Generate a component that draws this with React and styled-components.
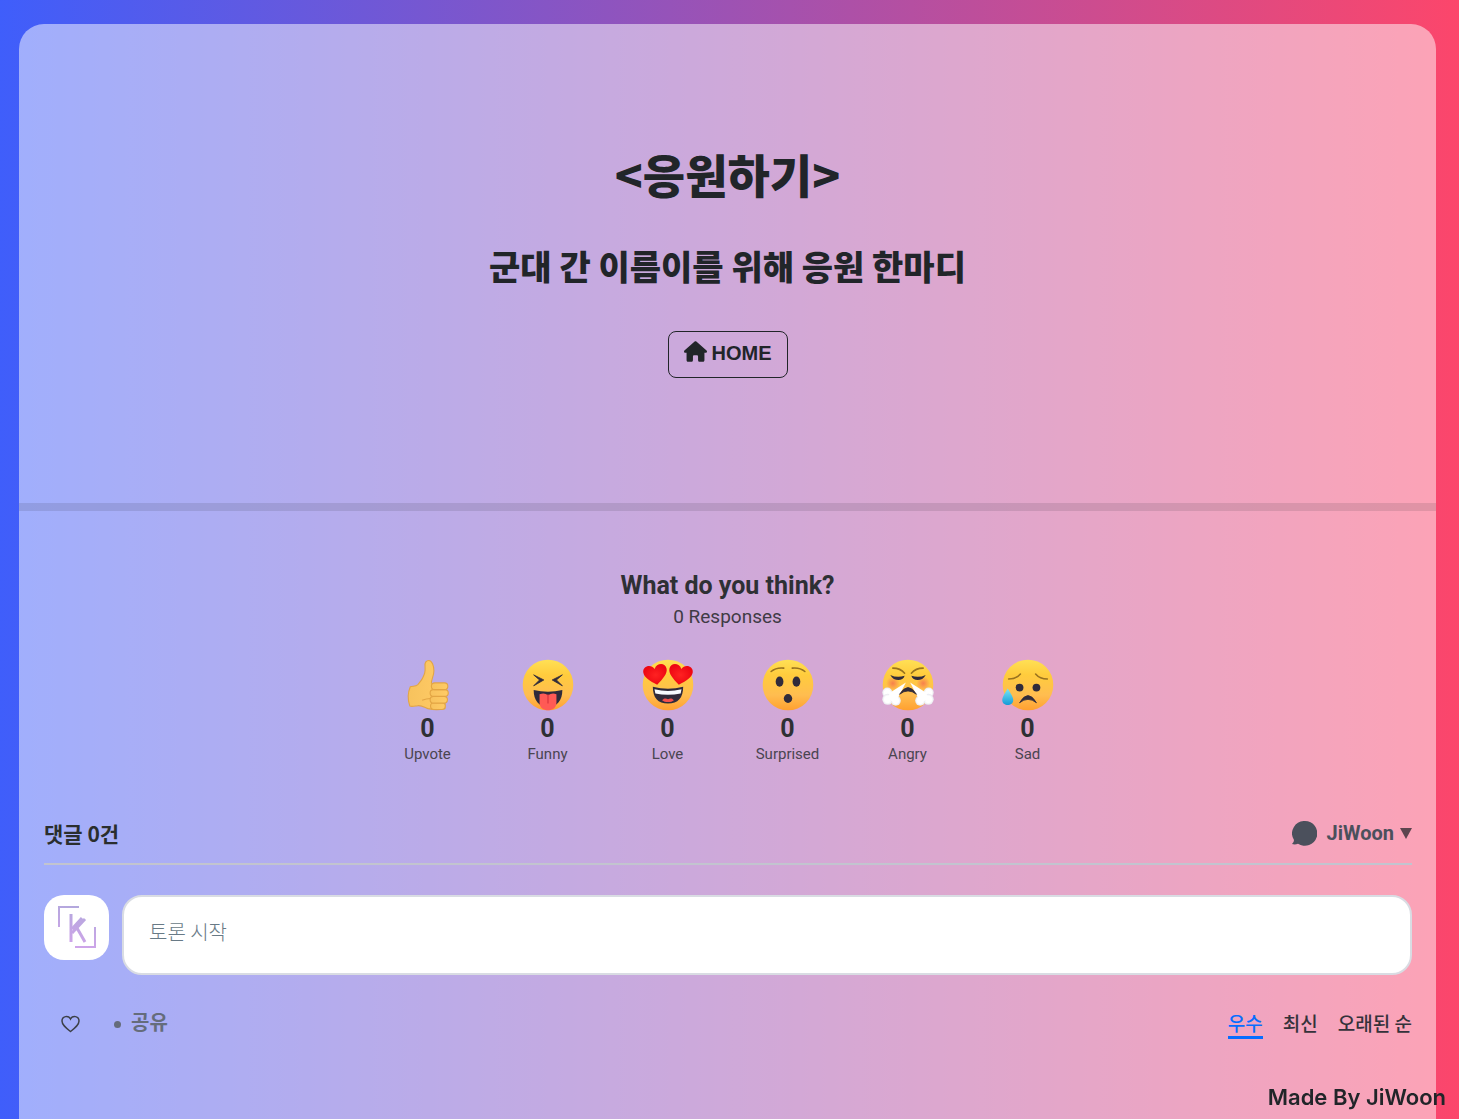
import React from "react";
import styled, { createGlobalStyle } from "styled-components";
import { FaHouse } from "react-icons/fa6";

const KOREAN = '"Noto Sans CJK KR", sans-serif';

const GlobalStyle = createGlobalStyle`
  * { box-sizing: border-box; }
  body {
    margin: 0;
    background: linear-gradient(to right, #3f5efb, #fc466b);
    color: #212529;
    font-family: Roboto, ${KOREAN};
  }
  h1, h2, h3, p { margin: 0; }
  button { padding: 0; border: 0; background: none; color: inherit; font: inherit; cursor: pointer; }
  a { color: inherit; text-decoration: none; }
  svg { display: block; flex: none; }
`;

const Page = styled.div`
  display: flex;
  min-height: 100vh;
  padding: 24px 23px 0 19px;
`;

const Panel = styled.main`
  flex: 1;
  min-width: 0;
  border-radius: 25px 25px 0 0;
  background: rgba(255, 255, 255, 0.5);
`;

const Hero = styled.header`
  display: flex;
  flex-direction: column;
  align-items: center;
  padding: 119px 24px 125px;
  border-bottom: 8px solid rgba(33, 37, 41, 0.12);
  font-family: ${KOREAN};
  text-align: center;
`;

const Title = styled.h1`
  font-size: 46px;
  font-weight: 900;
  line-height: 60px;
`;

const Subtitle = styled.h2`
  margin-top: 43px;
  font-size: 34px;
  font-weight: 900;
  line-height: 40px;
`;

const HomeLink = styled.a`
  display: flex;
  gap: 5px;
  margin-top: 45px;
  padding: 8px 15px;
  height: 47px;
  border: 1px solid #212529;
  border-radius: 8px;
  font-family: "Liberation Sans", sans-serif;
  font-size: 20px;
  font-weight: 700;
  line-height: 26px;
`;

const Reactions = styled.section`
  display: flex;
  flex-direction: column;
  align-items: center;
  padding-top: 60px;
  color: #2e3034;
`;

const Question = styled.h3`
  font-size: 25px;
  font-weight: 700;
  line-height: 30px;
`;

const Responses = styled.p`
  margin-top: 4px;
  font-size: 19px;
  line-height: 24px;
  color: #3f3b45;
`;

const ReactionList = styled.div`
  display: flex;
  flex-wrap: wrap;
  justify-content: center;
  margin-top: 29px;
`;

const Reaction = styled.button`
  display: flex;
  flex-direction: column;
  align-items: center;
  width: 120px;
`;

const Count = styled.span`
  margin-top: 2px;
  font-size: 25px;
  font-weight: 700;
  line-height: 30px;
`;

const ReactionName = styled.span`
  font-size: 15px;
  line-height: 20px;
  color: #4a4550;
`;

const Thread = styled.section`
  padding: 56px 24px 80px 25px;
`;

const ThreadBar = styled.div`
  display: flex;
  align-items: center;
  justify-content: space-between;
  height: 45px;
  padding-bottom: 17px;
  border-bottom: 2px solid #c2c4cf;
`;

const CommentCount = styled.h3`
  font-family: ${KOREAN};
  font-size: 21px;
  font-weight: 700;
  line-height: 24px;
  color: #2a2e2e;
`;

const UserMenu = styled.button`
  display: flex;
  align-items: center;
  gap: 6px;
  color: #4b505c;
  font-size: 20px;
  font-weight: 700;
  line-height: 24px;
`;

const UserName = styled.span`
  margin-left: 4px;
`;

const Composer = styled.form`
  display: flex;
  gap: 13px;
  margin-top: 30px;
`;

const Avatar = styled.span`
  display: block;
  flex: none;
  width: 65px;
  height: 65px;
  border-radius: 20px;
  background: #fff;
`;

const CommentBox = styled.textarea`
  flex: 1;
  min-width: 0;
  height: 80px;
  padding: 20px 25px;
  border: 2px solid #d9dce3;
  border-radius: 20px;
  background: #fff;
  resize: none;
  outline: none;
  font-family: ${KOREAN};
  font-size: 20px;
  font-weight: 300;
  line-height: 30px;
  &::placeholder { color: #687a86; opacity: 1; }
`;

const ThreadActions = styled.div`
  display: flex;
  align-items: flex-start;
  justify-content: space-between;
  margin-top: 35px;
  font-family: ${KOREAN};
`;

const ActionGroup = styled.div`
  display: flex;
  align-items: center;
  gap: 34px;
  padding-left: 17px;
`;

const LikeButton = styled.button`
  padding-top: 3px;
`;

const ShareButton = styled.button`
  display: flex;
  align-items: center;
  gap: 10px;
  color: #656c7b;
  font-size: 20px;
  font-weight: 700;
  line-height: 24px;
`;

const Dot = styled.span`
  width: 7px;
  height: 7px;
  margin-top: 4px;
  border-radius: 50%;
  background: currentColor;
`;

const SortGroup = styled.div`
  display: flex;
  gap: 20px;
`;

const SortButton = styled.button`
  height: 29px;
  border-bottom: 3px solid ${(p) => (p.$active ? "#076dff" : "transparent")};
  color: ${(p) => (p.$active ? "#076dff" : "#34323a")};
  font-size: 19px;
  font-weight: 500;
  line-height: 26px;
`;

const Credit = styled.footer`
  position: fixed;
  right: 13px;
  bottom: 8px;
  font-family: Inter, sans-serif;
  font-size: 22px;
  font-weight: 600;
  line-height: 28px;
`;

const INK = "#302b3b";

function Face({ children }) {
  return (
    <>
      <circle cx="32" cy="32" r="30" fill="url(#skin)" />
      {children}
    </>
  );
}

const Thumb = () => (
  <g fill="url(#hand)" stroke="#e3a544" strokeWidth="1.3" strokeLinejoin="round">
    <path d="M11 34C15 33 17 34 20 31.500C23 28 24 27 25.500 24C28 19 29 17 28.500 10C28 5 30 3 33 3C37 3 39 10 39 15C39 21 36 25 36 30L52 32V60C45 62 38 61.500 32 60C27 58 24 56 20 56.500C16 57 13 58 10.500 57C8 50 8 41 11 34z" />
    <rect x="35" y="53" width="17.500" height="8" rx="4" />
    <rect x="34.500" y="45.500" width="20.500" height="8" rx="4" />
    <rect x="34.500" y="37.500" width="21.500" height="8" rx="4" />
    <rect x="36" y="29.500" width="19.500" height="8" rx="4" />
    <path d="M25 50q5-2 10-2" fill="none" />
  </g>
);

const Funny = () => (
  <Face>
    <path d="M15 20l12 6-12 7 7-7zM49 20l-12 6 12 7-7-7z" fill={INK} stroke={INK} strokeLinejoin="round" />
    <path d="M15 38q17 4 34 0c0 12-6 20-17 20s-17-8-17-20z" fill={INK} />
    <path d="M22 43q6-2 10 1 5-3 10-1v10c0 12-20 12-20 0z" fill="#ff5a55" />
    <path d="M32 43v11" stroke="#d9343d" strokeWidth="1.4" />
  </Face>
);

const Heart = ({ x, flip }) => (
  <path
    transform={`translate(${x} 18) rotate(${flip ? 9 : -9})`}
    d="M0 14C-8 8-14 3-14-3c0-8 11-9 14-2C3-12 14-11 14-3 14 3 8 8 0 14z"
    fill="url(#heart)"
  />
);

const Love = () => (
  <Face>
    <Heart x={17} />
    <Heart x={47} flip />
    <path d="M14 34q18 5 36 0c0 13-6 20-18 20s-18-7-18-20z" fill={INK} />
    <path d="M16 37q16 4 32 0l-1 5q-15 3-30 0z" fill="#f7fbff" />
    <path d="M25 50c3-3 5-2 7-1 2-1 4-2 7 1-3 3-11 3-14 0z" fill="#f2504e" />
  </Face>
);

const Surprised = () => (
  <Face>
    <path d="M12 16q6-5 15-4M52 16q-6-5-15-4" stroke="#98721f" strokeWidth="1.8" fill="none" strokeLinecap="round" />
    <ellipse cx="22" cy="28" rx="4.600" ry="6" fill={INK} />
    <ellipse cx="42" cy="28" rx="4.600" ry="6" fill={INK} />
    <ellipse cx="32" cy="48" rx="5" ry="5.200" fill={INK} />
  </Face>
);

const Angry = () => (
  <Face>
    <circle cx="14" cy="30" r="8" fill="url(#blush)" />
    <circle cx="50" cy="30" r="8" fill="url(#blush)" />
    <path d="M14 12q9 0 14 6M50 12q-9 0-14 6" stroke="#98721f" strokeWidth="1.800" fill="none" strokeLinecap="round" />
    <path d="M11 20q8 4 17 1c-2 7-13 7-17-1zM53 20q-8 4-17 1c2 7 13 7 17-1z" fill={INK} />
    <g fill="url(#steam)">
      <circle cx="7.500" cy="41" r="6" />
      <circle cx="8" cy="49" r="6.500" />
      <circle cx="17.500" cy="50.500" r="6" />
      <circle cx="56.500" cy="41" r="6" />
      <circle cx="56" cy="49" r="6.500" />
      <circle cx="46.500" cy="50.500" r="6" />
    </g>
    <path d="M29.500 29L11 41l-4 7 8 4 5-5zM34.500 29L53 41l4 7-8 4-5-5z" fill="#fff" />
    <path d="M22 43q10-16 20 0-10-8-20 0z" fill={INK} stroke={INK} strokeLinejoin="round" />
  </Face>
);

const Sad = () => (
  <Face>
    <path d="M9 25q9 0 14-6M55 25q-9 0-14-6" stroke="#98721f" strokeWidth="1.800" fill="none" strokeLinecap="round" />
    <circle cx="22" cy="35" r="4.600" fill={INK} />
    <circle cx="42" cy="35" r="4.600" fill={INK} />
    <path d="M22 53q10-17 20 0-10-8-20 0z" fill={INK} stroke={INK} strokeLinejoin="round" />
    <path d="M8 36c4 7 6.500 10 6.500 14 0 7.500-13 7.500-13 0 0-4 3-8 6.500-14z" fill="url(#tear)" />
  </Face>
);

const REACTIONS = [
  ["Upvote", Thumb],
  ["Funny", Funny],
  ["Love", Love],
  ["Surprised", Surprised],
  ["Angry", Angry],
  ["Sad", Sad],
];

const SORTS = ["우수", "최신", "오래된 순"];

const Gradients = () => (
  <svg width="0" height="0" aria-hidden="true">
    <defs>
      <linearGradient id="skin" x2="0" y2="1">
        <stop offset="0" stopColor="#ffe055" />
        <stop offset=".3" stopColor="#ffcc3d" />
        <stop offset=".7" stopColor="#ffbd50" />
        <stop offset="1" stopColor="#ffa030" />
      </linearGradient>
      <linearGradient id="hand" x2="1" y2="0">
        <stop offset="0" stopColor="#f7c25d" />
        <stop offset="1" stopColor="#ffcb66" />
      </linearGradient>
      <radialGradient id="heart">
        <stop offset="0" stopColor="#ff2222" />
        <stop offset="1" stopColor="#ee0712" />
      </radialGradient>
      <radialGradient id="blush">
        <stop offset="0" stopColor="#f4694f" stopOpacity=".75" />
        <stop offset="1" stopColor="#f4694f" stopOpacity="0" />
      </radialGradient>
      <radialGradient id="steam">
        <stop offset=".6" stopColor="#fff" />
        <stop offset="1" stopColor="#e8e8ee" />
      </radialGradient>
      <linearGradient id="tear" x2="0" y2="1">
        <stop offset="0" stopColor="#7be7f8" />
        <stop offset="1" stopColor="#159bd7" />
      </linearGradient>
      <linearGradient id="brand" gradientUnits="userSpaceOnUse" x1="40" y1="11" x2="28" y2="52">
        <stop offset="0" stopColor="#b1a8dc" />
        <stop offset="1" stopColor="#d0a4ea" />
      </linearGradient>
    </defs>
  </svg>
);

const Logo = () => (
  <svg width="65" height="65" viewBox="0 0 65 65" fill="none" stroke="url(#brand)" aria-hidden="true">
    <path d="M15 32V12h20M51 32v20H31" strokeWidth="2" />
    <path d="M27 19v28" strokeWidth="3" />
    <path d="M28 34L38 23M28 38l13-14M33 33l8 14" strokeWidth="3" />
  </svg>
);

export default function App() {
  return (
    <>
      <GlobalStyle />
      <Page>
        <Panel>
          <Hero>
            <Title>&lt;응원하기&gt;</Title>
            <Subtitle>군대 간 이름이를 위해 응원 한마디</Subtitle>
            <HomeLink href="#">
              <FaHouse size={23} aria-hidden="true" />
              HOME
            </HomeLink>
          </Hero>

          <Reactions>
            <Question>What do you think?</Question>
            <Responses>0 Responses</Responses>
            <ReactionList>
              {REACTIONS.map(([name, Emoji]) => (
                <Reaction key={name} type="button">
                  <svg width="54" height="54" viewBox="0 0 64 64" aria-hidden="true">
                    <Emoji />
                  </svg>
                  <Count>0</Count>
                  <ReactionName>{name}</ReactionName>
                </Reaction>
              ))}
            </ReactionList>
          </Reactions>

          <Thread>
            <ThreadBar>
              <CommentCount>댓글 0건</CommentCount>
              <UserMenu type="button">
                <svg width="25" height="25" viewBox="0 0 25 25" fill="currentColor" aria-hidden="true">
                  <path d="M13 0a12.400 12.400 0 1 1-7 22.700Q3 24 0 23q2-1.500 2-4A12.400 12.400 0 0 1 13 0z" />
                </svg>
                <UserName>JiWoon</UserName>
                <svg width="12" height="11" viewBox="0 0 12 11" fill="#5d454f" aria-hidden="true">
                  <path d="M0 0h12L6 11z" />
                </svg>
              </UserMenu>
            </ThreadBar>

            <Composer>
              <Avatar>
                <Logo />
              </Avatar>
              <CommentBox aria-label="토론 시작" placeholder="토론 시작" />
            </Composer>

            <ThreadActions>
              <ActionGroup>
                <LikeButton type="button" aria-label="추천">
                  <svg width="19" height="18" viewBox="0 0 19 18" fill="none" stroke="#3c4048" strokeWidth="1.500" aria-hidden="true">
                    <path d="M9.500 16.500C5 13 1 10 1 6c0-5 6.500-6 8.500-2C11.500 0 18 1 18 6c0 4-4 7-8.500 10.500z" />
                  </svg>
                </LikeButton>
                <ShareButton type="button">
                  <Dot />
                  공유
                </ShareButton>
              </ActionGroup>
              <SortGroup>
                {SORTS.map((label, i) => (
                  <SortButton key={label} type="button" $active={i === 0}>
                    {label}
                  </SortButton>
                ))}
              </SortGroup>
            </ThreadActions>
          </Thread>
        </Panel>
      </Page>
      <Gradients />
      <Credit>Made By JiWoon</Credit>
    </>
  );
}
